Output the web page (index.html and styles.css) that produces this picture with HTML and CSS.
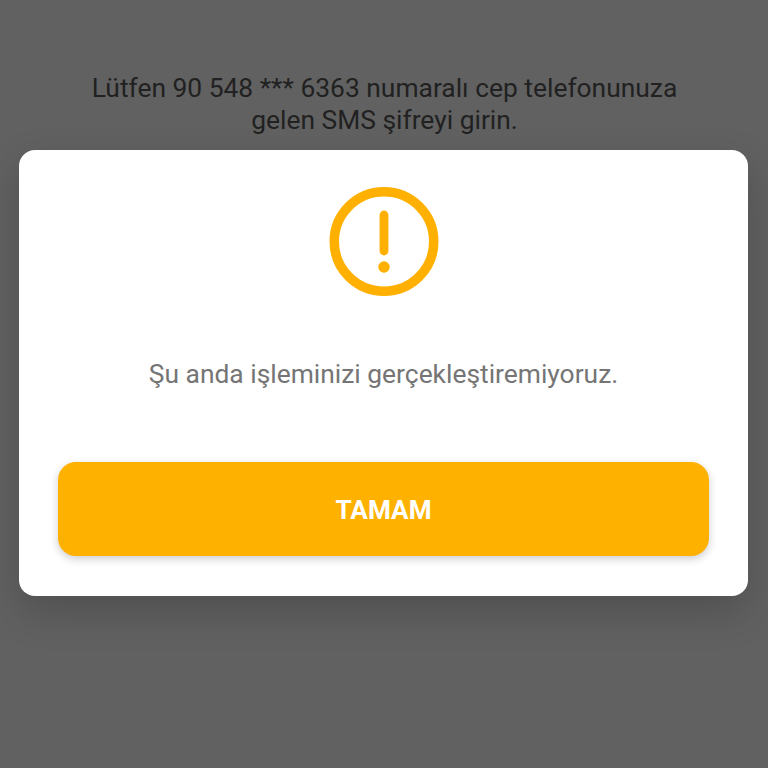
FILE: index.html
```html
<!DOCTYPE html>
<html lang="tr">
<head>
<meta charset="utf-8">
<title>SMS</title>
<link rel="stylesheet" href="styles.css">
</head>
<body>
<main class="screen">
  <p class="intro">Lütfen 90 548 *** 6363 numaralı cep telefonunuza<br>gelen SMS şifreyi girin.</p>
  <section class="card">
    <svg class="icon" viewBox="0 0 110 110" width="110" height="110" aria-hidden="true">
      <circle cx="55" cy="54.5" r="49.75" fill="none" stroke="#ffb000" stroke-width="9.5"/>
      <path d="M55 28V64" fill="none" stroke="#ffb000" stroke-width="8.8" stroke-linecap="round"/>
      <circle cx="55" cy="80" r="5.7" fill="#ffb000"/>
    </svg>
    <p class="message">Şu anda işleminizi gerçekleştiremiyoruz.</p>
    <button class="action" type="button">TAMAM</button>
  </section>
</main>
</body>
</html>
```
FILE: styles.css
```css
* {
  box-sizing: border-box;
}

html,
body {
  margin: 0;
  height: 100%;
}

body {
  background: #616161;
  font-family: Roboto, "Noto Sans", sans-serif;
}

.screen {
  display: flex;
  flex-direction: column;
  align-items: flex-start;
  height: 768px;
  padding: 72px 18px 0 19px;
  overflow: hidden;
}

.intro {
  align-self: center;
  margin: 0;
  font-size: 26.4px;
  line-height: 32px;
  text-align: center;
  color: #212121;
}

.card {
  display: flex;
  flex-direction: column;
  align-items: center;
  flex: none;
  width: 729px;
  height: 446px;
  margin-top: 14px;
  padding: 37px 39px 40px;
  background: #ffffff;
  border-radius: 16px;
  box-shadow: 0 16px 40px rgba(0, 0, 0, 0.18);
}

.icon {
  flex: none;
  display: block;
}

.message {
  margin: 61px 0 0;
  font-size: 26.4px;
  line-height: 32px;
  color: #757575;
  text-align: center;
}

.action {
  width: 100%;
  height: 94px;
  margin-top: auto;
  padding: 2px 0 0;
  border: 0;
  border-radius: 18px;
  background: #ffb100;
  color: #ffffff;
  font-family: inherit;
  font-size: 26.2px;
  font-weight: 700;
  box-shadow: 0 3px 8px rgba(0, 0, 0, 0.2);
}
```
